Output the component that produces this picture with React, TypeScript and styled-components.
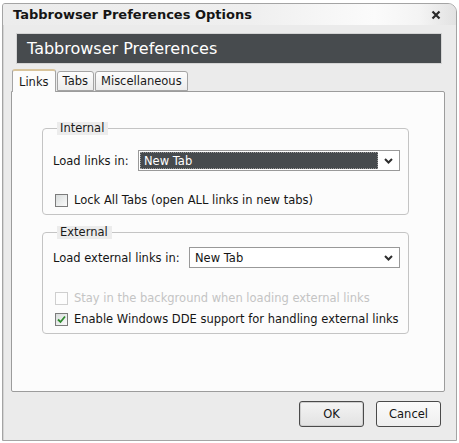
import React from "react";
import styled, { createGlobalStyle } from "styled-components";

const GlobalStyle = createGlobalStyle`
  html, body { margin: 0; padding: 0; background: #ffffff; }
  body { font-family: "DejaVu Sans", sans-serif; font-size: 11.5px; color: #111; }
  * { box-sizing: border-box; }
`;

const Page = styled.div`
  padding: 3px 0 0 2px;
  width: 459px;
  height: 443px;
`;

const Window = styled.div`
  width: 455px;
  height: 438px;
  border: 1px solid #a4a4a4;
  border-radius: 3px 9px 0 0;
  background: #ebebeb;
  display: flex;
  flex-direction: column;
  overflow: hidden;
  box-shadow: inset 1px 0 0 #d4d4d4;
`;

const TitleBar = styled.div`
  height: 21px;
  flex: none;
  display: flex;
  align-items: center;
  justify-content: space-between;
  padding: 0 15px 0 10px;
  background: linear-gradient(to right, #ececec 0%, #efefef 55%, #fbfbfb 82%, #f4f4f4 92%, #e2e2e2 100%);
`;

const TitleText = styled.span`
  font-family: "DejaVu Sans", sans-serif;
  font-weight: bold;
  font-size: 13px;
  color: #151515;
`;

const CloseButton = styled.span`
  display: flex;
  width: 10px;
  height: 10px;
`;

const Banner = styled.div`
  margin: 8px 0 0 13px;
  width: 426px;
  height: 31px;
  flex: none;
  border: 1px solid #d4d4d4;
  background: #474b4e;
  color: #ffffff;
  font-size: 16px;
  display: flex;
  align-items: center;
  padding-left: 10px;
  padding-bottom: 1px;
`;

const TabStrip = styled.div`
  display: flex;
  align-items: flex-end;
  margin: 4px 0 0 9px;
  height: 23px;
  flex: none;
  position: relative;
  z-index: 1;
`;

const Tab = styled.div<{ $active?: boolean }>`
  height: ${(p) => (p.$active ? "23px" : "20px")};
  margin-bottom: ${(p) => (p.$active ? "-1px" : "0")};
  padding: 0 ${(p) => (p.$active ? "6px" : "5px")};
  border: 1px solid #a4a4a4;
  border-bottom: ${(p) => (p.$active ? "none" : "1px solid #a4a4a4")};
  border-top: ${(p) => (p.$active ? "2px solid #d8c49c" : "1px solid #a4a4a4")};
  border-radius: 3px 3px 0 0;
  background: ${(p) => (p.$active ? "#fcfcfc" : "linear-gradient(#fdfdfd, #ececec)")};
  display: flex;
  align-items: center;
  font-size: 11.5px;
  color: #1a1a1a;
  margin-right: 1px;
`;

const Panel = styled.div`
  margin-left: 8px;
  width: 434px;
  height: 301px;
  flex: none;
  border: 1px solid #9c9c9c;
  border-radius: 0 2px 2px 2px;
  background: #fcfcfc;
  padding: 30px 35px 0 30px;
`;

const Group = styled.fieldset<{ $gap?: number; $top: number }>`
  margin: 0 0 ${(p) => p.$gap ?? 0}px 0;
  padding: ${(p) => p.$top}px 8px 6px 10px;
  border: 1px solid #c4c4c4;
  border-radius: 4px;
  min-width: 0;
`;

const Legend = styled.legend`
  margin-left: 4px;
  padding: 0 4px 0 3px;
  background: #ececec;
  font-size: 11.5px;
  line-height: 13px;
  color: #1a1a1a;
`;

const FieldRow = styled.div`
  display: flex;
  align-items: center;
  height: 21px;
`;

const Label = styled.span<{ $width: number }>`
  width: ${(p) => p.$width}px;
  flex: none;
  color: #151515;
`;

const Select = styled.div`
  flex: 1;
  height: 21px;
  border: 1px solid #999;
  background: #fff;
  display: flex;
  align-items: stretch;
  padding: 1px;
`;

const SelectValue = styled.div<{ $focused?: boolean }>`
  flex: 1;
  display: flex;
  align-items: center;
  padding-left: 4px;
  background: ${(p) => (p.$focused ? "#474b4e" : "transparent")};
  color: ${(p) => (p.$focused ? "#ffffff" : "#151515")};
  outline: ${(p) => (p.$focused ? "1px dotted #9a9a9a" : "none")};
  outline-offset: -1px;
`;

const Arrow = styled.div`
  width: 20px;
  flex: none;
  display: flex;
  align-items: center;
  justify-content: center;
`;

const CheckRow = styled.label<{ $top: number; $disabled?: boolean }>`
  display: flex;
  align-items: center;
  height: 16px;
  margin-top: ${(p) => p.$top}px;
  padding-left: 2px;
  color: ${(p) => (p.$disabled ? "#c4c4c4" : "#151515")};
`;

const Box = styled.span<{ $disabled?: boolean }>`
  width: 13px;
  height: 13px;
  flex: none;
  margin-right: 6px;
  border: 1px solid ${(p) => (p.$disabled ? "#cfcfcf" : "#7c7c7c")};
  background: ${(p) => (p.$disabled ? "#fdfdfd" : "linear-gradient(135deg, #d8dcdc, #fbfbfb)")};
  display: flex;
  align-items: center;
  justify-content: center;
`;

const ButtonRow = styled.div`
  display: flex;
  justify-content: flex-end;
  gap: 12px;
  margin: 9px 15px 0 0;
`;

const Button = styled.button<{ $default?: boolean }>`
  width: 65px;
  height: 26px;
  border: 1px solid #4a4a4a;
  border-radius: 3px;
  background: ${(p) => (p.$default ? "linear-gradient(#f4f4f4, #e2e2e2)" : "linear-gradient(#fbfbfb, #efefef)")};
  box-shadow: ${(p) => (p.$default ? "inset 0 0 0 1px #cfcfcf" : "none")};
  font-family: "DejaVu Sans", sans-serif;
  font-size: 11.5px;
  color: #151515;
  padding: 0;
`;

const Chevron = () => (
  <svg width="9" height="6" viewBox="0 0 9 6">
    <path d="M1 1 L4.5 4.5 L8 1" fill="none" stroke="#2e2e2e" strokeWidth="2" />
  </svg>
);

const Check = () => (
  <svg width="9" height="9" viewBox="0 0 9 9">
    <path d="M1 4.5 L3.5 7 L8 1.5" fill="none" stroke="#2f8a2f" strokeWidth="1.8" />
  </svg>
);

export default function App() {
  return (
    <>
      <GlobalStyle />
      <Page>
        <Window>
          <TitleBar>
            <TitleText>Tabbrowser Preferences Options</TitleText>
            <CloseButton>
              <svg width="10" height="10" viewBox="0 0 10 10">
                <path d="M1.5 1.5 L8.5 8.5 M8.5 1.5 L1.5 8.5" stroke="#2a2a2a" strokeWidth="2.2" />
              </svg>
            </CloseButton>
          </TitleBar>
          <Banner>Tabbrowser Preferences</Banner>
          <TabStrip>
            <Tab $active>Links</Tab>
            <Tab>Tabs</Tab>
            <Tab>Miscellaneous</Tab>
          </TabStrip>
          <Panel>
            <Group $gap={11} $top={15}>
              <Legend>Internal</Legend>
              <FieldRow>
                <Label $width={85}>Load links in:</Label>
                <Select>
                  <SelectValue $focused>New Tab</SelectValue>
                  <Arrow>
                    <Chevron />
                  </Arrow>
                </Select>
              </FieldRow>
              <CheckRow $top={21}>
                <Box />
                Lock All Tabs (open ALL links in new tabs)
              </CheckRow>
            </Group>
            <Group $top={8}>
              <Legend>External</Legend>
              <FieldRow>
                <Label $width={136}>Load external links in:</Label>
                <Select>
                  <SelectValue>New Tab</SelectValue>
                  <Arrow>
                    <Chevron />
                  </Arrow>
                </Select>
              </FieldRow>
              <CheckRow $top={22} $disabled>
                <Box $disabled />
                Stay in the background when loading external links
              </CheckRow>
              <CheckRow $top={5}>
                <Box>
                  <Check />
                </Box>
                Enable Windows DDE support for handling external links
              </CheckRow>
            </Group>
          </Panel>
          <ButtonRow>
            <Button $default>OK</Button>
            <Button>Cancel</Button>
          </ButtonRow>
        </Window>
      </Page>
    </>
  );
}
